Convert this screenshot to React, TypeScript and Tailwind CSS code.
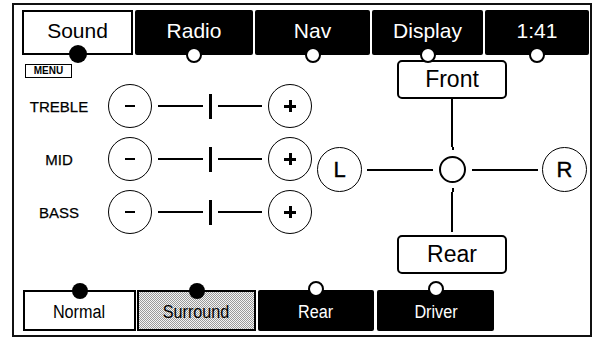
import React from "react";

const F = "font-['Liberation_Sans',Arial,Helvetica,sans-serif]";

function Dot({ filled, size, offset, top }: { filled: boolean; size: number; offset: number; top?: boolean }) {
  const style: React.CSSProperties = { width: size, height: size };
  if (top) style.top = -offset;
  else style.bottom = -offset;
  return (
    <div
      className={`absolute left-1/2 -translate-x-1/2 rounded-full z-10 ${filled ? "bg-black" : "bg-white border-2 border-black"}`}
      style={style}
    />
  );
}

function Tab({ label, w, active }: { label: string; w: string; active?: boolean }) {
  return (
    <div
      className={`relative h-[45px] ${w} flex justify-center ${
        active ? "bg-white border-2 border-black text-black pt-[7px]" : "bg-black text-white pt-[9px] rounded-[2px]"
      }`}
    >
      <span className="text-[21px] leading-[23px]">{label}</span>
      {active ? <Dot filled size={18} offset={10} /> : <Dot filled={false} size={16} offset={8} />}
    </div>
  );
}

function Circle({ children, size = 44 }: { children: React.ReactNode; size?: number }) {
  return (
    <div
      className="rounded-full border-[1.5px] border-black flex items-center justify-center shrink-0 bg-white"
      style={{ width: size, height: size }}
    >
      {children}
    </div>
  );
}

function ToneRow({ label }: { label: string }) {
  return (
    <div className="flex items-center h-[44px]">
      <div className="w-[74px] text-center text-[15px] leading-none [-webkit-text-stroke:0.25px_black]">{label}</div>
      <div className="ml-[12px]">
        <Circle>
          <div className="w-[10px] h-[2.5px] bg-black" />
        </Circle>
      </div>
      <div className="ml-[6px] w-[45px] h-[2px] bg-black" />
      <div className="ml-[6px] w-[3px] h-[25px] bg-black" />
      <div className="ml-[6px] w-[44px] h-[2px] bg-black" />
      <div className="ml-[6px]">
        <Circle>
          <div className="relative w-[12px] h-[12px]">
            <div className="absolute left-0 top-[5px] w-[12px] h-[2.5px] bg-black" />
            <div className="absolute top-0 left-[5px] w-[2.5px] h-[12px] bg-black" />
          </div>
        </Circle>
      </div>
    </div>
  );
}

function BottomBtn({
  label,
  w,
  kind,
  ml,
}: {
  label: string;
  w: string;
  kind: "white" | "stipple" | "black";
  ml: string;
}) {
  const base =
    kind === "white"
      ? "bg-white border-2 border-black text-black"
      : kind === "stipple"
      ? "border-2 border-black text-black bg-[repeating-conic-gradient(#9a9a9a_0_25%,#f4f4f4_0_50%)] bg-[length:2px_2px]"
      : "bg-black text-white rounded-[2px]";
  return (
    <div className={`relative h-[41px] ${w} ${ml} flex items-center justify-center ${base}`}>
      <span className="inline-block text-[18px] leading-none scale-x-90 mt-[2px]">{label}</span>
      <Dot filled={kind !== "black"} size={16} offset={9} top />
    </div>
  );
}

export default function App() {
  return (
    <div className={`w-[595px] h-[338px] bg-white overflow-hidden ${F}`}>
      <div className="ml-[12px] mt-[3px] w-[580px] h-[334px] border-2 border-[#111] bg-white flex flex-col">
        {/* Top tabs */}
        <div className="flex pl-[8px] pt-[5px] gap-[2px]">
          <Tab label="Sound" w="w-[111px]" active />
          <Tab label="Radio" w="w-[118px]" />
          <Tab label="Nav" w="w-[115px]" />
          <Tab label="Display" w="w-[111px]" />
          <Tab label="1:41" w="w-[104px]" />
        </div>

        {/* Main area */}
        <div className="flex pl-[8px] h-[234px]">
          <div className="w-[290px] flex flex-col">
            <div className="mt-[9px] ml-[3px] w-[47px] h-[14px] border-[1.5px] border-black flex items-center justify-center text-[10px] font-bold leading-none">
              MENU
            </div>
            <div className="mt-[6px] flex flex-col gap-[9px]">
              <ToneRow label="TREBLE" />
              <ToneRow label="MID" />
              <ToneRow label="BASS" />
            </div>
          </div>

          <div className="ml-[5px] mt-[5px] w-[270px] flex flex-col items-center">
            <div className="w-[110px] h-[39px] border-2 border-black rounded-[5px] flex items-center justify-center text-[23px] leading-none">
              Front
            </div>
            <div className="w-[2px] h-[48px] bg-black" />
            <div className="flex items-center w-full h-[45px]">
              <Circle size={45}>
                <span className="text-[22px] leading-none [-webkit-text-stroke:0.4px_black]">L</span>
              </Circle>
              <div className="ml-[5px] w-[66px] h-[2px] bg-black" />
              <div className="ml-[6px] w-[27px] h-[45px] flex flex-col items-center">
                <div className="w-[2px] h-[3px] bg-black" />
                <div className="mt-[6px] w-[27px] h-[27px] rounded-full border-2 border-black" />
                <div className="mt-[5px] w-[2px] h-[4px] bg-black" />
              </div>
              <div className="ml-[6px] w-[66px] h-[2px] bg-black" />
              <div className="ml-[4px]">
                <Circle size={45}>
                  <span className="text-[22px] leading-none [-webkit-text-stroke:0.4px_black]">R</span>
                </Circle>
              </div>
            </div>
            <div className="w-[2px] h-[40px] bg-black" />
            <div className="mt-[3px] w-[110px] h-[39px] border-2 border-black rounded-[5px] flex items-center justify-center text-[23px] leading-none">
              Rear
            </div>
          </div>
        </div>

        {/* Bottom buttons */}
        <div className="flex pl-[9px] pt-[1px]">
          <BottomBtn label="Normal" w="w-[113px]" kind="white" ml="ml-0" />
          <BottomBtn label="Surround" w="w-[119px]" kind="stipple" ml="ml-[1px]" />
          <BottomBtn label="Rear" w="w-[116px]" kind="black" ml="ml-[2px]" />
          <BottomBtn label="Driver" w="w-[117px]" kind="black" ml="ml-[3px]" />
        </div>
      </div>
    </div>
  );
}
